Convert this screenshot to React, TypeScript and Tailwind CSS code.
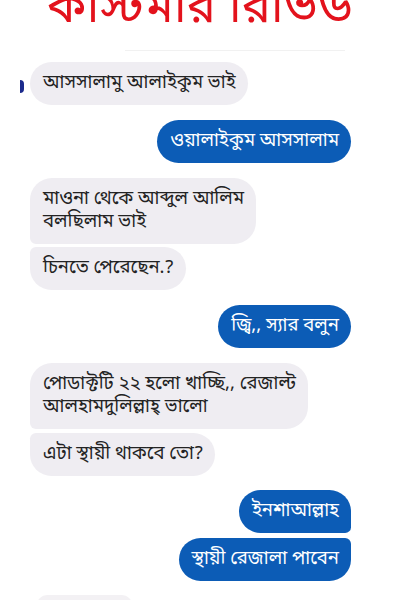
const bn = { fontFamily: '"Noto Sans Bengali", "Lohit Bengali", "Noto Sans", sans-serif' };

type Msg = { text: string[]; me: boolean; cls: string; mt: string };

const messages: Msg[] = [
  { text: ["আসসালামু আলাইকুম ভাই"], me: false, cls: "rounded-[22px]", mt: "mt-0" },
  { text: ["ওয়ালাইকুম আসসালাম"], me: true, cls: "rounded-[22px]", mt: "mt-[15px]" },
  { text: ["মাওনা থেকে আব্দুল আলিম", "বলছিলাম ভাই"], me: false, cls: "rounded-[22px] rounded-bl-[6px]", mt: "mt-[15px]" },
  { text: ["চিনতে পেরেছেন.?"], me: false, cls: "rounded-[22px] rounded-tl-[6px]", mt: "mt-[3px]" },
  { text: ["জ্বি,, স্যার বলুন"], me: true, cls: "rounded-[22px]", mt: "mt-[15px]" },
  { text: ["পোডাক্টটি ২২ হলো খাচ্ছি,, রেজাল্ট", "আলহামদুলিল্লাহ্ ভালো"], me: false, cls: "rounded-[22px] rounded-bl-[6px]", mt: "mt-[15px]" },
  { text: ["এটা স্থায়ী থাকবে তো?"], me: false, cls: "rounded-[22px] rounded-tl-[6px]", mt: "mt-[4px]" },
  { text: ["ইনশাআল্লাহ"], me: true, cls: "rounded-[22px] rounded-br-[6px]", mt: "mt-[14px]" },
  { text: ["স্থায়ী রেজালা পাবেন"], me: true, cls: "rounded-[22px] rounded-tr-[6px]", mt: "mt-[5px]" },
];

export default function App() {
  return (
    <div className="w-[400px] h-[600px] overflow-hidden bg-white" style={bn}>
      {/* Title */}
      <div className="h-[50px] flex justify-center items-end overflow-hidden">
        <h1 className="text-[49px] leading-none text-[#e3121c] mb-[16px] whitespace-nowrap">কাস্টমার রিভিউ</h1>
      </div>
      <div className="w-[220px] ml-[125px] h-px bg-[#f1f1f1]" />

      {/* Chat */}
      <div className="flex flex-col pl-[30px] pr-[49px] pt-[11px]">
        {messages.map((m, i) => (
          <div key={i} className={`flex items-center ${m.me ? "justify-end" : "justify-start"} ${m.mt} relative`}>
            {i === 0 && (
              <span className="absolute left-[-10px] top-[18px] w-[4px] h-[13px] rounded-r-full bg-[#1b2a8c]" />
            )}
            <div
              className={`pl-[13px] pr-[12px] py-[10px] text-[18.5px] leading-[23px] whitespace-nowrap ${m.cls} ${
                m.me ? "bg-[#0c5cb6] text-white" : "bg-[#efedf2] text-[#232323]"
              }`}
            >
              {m.text.map((t, j) => (
                <div key={j}>{t}</div>
              ))}
            </div>
          </div>
        ))}
        <div className="mt-[14px] w-[95px] h-[20px] ml-[7px] rounded-[18px] bg-[#f3f1f4]" />
      </div>
    </div>
  );
}
